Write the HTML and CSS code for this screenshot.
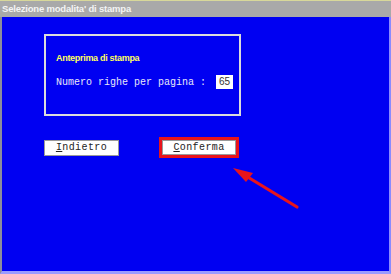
FILE: index.html
```html
<!DOCTYPE html>
<html lang="it">
<head>
    <meta charset="UTF-8">
    <title>Selezione modalita' di stampa</title>
    <link rel="stylesheet" href="styles.css">
</head>
<body>
    <div class="window">
        <div class="titlebar">Selezione modalita' di stampa</div>

        <div class="client">
            <!-- Riquadro anteprima -->
            <div class="panel">
                <div class="panel-title">Anteprima di stampa</div>
                <div class="row">
                    <span class="label">Numero righe per pagina :</span>
                    <span class="field">65</span>
                </div>
            </div>

            <!-- Pulsanti -->
            <div class="buttons">
                <button class="btn"><u>I</u>ndietro</button>
                <div class="highlight">
                    <button class="btn btn-small"><u>C</u>onferma</button>
                </div>
            </div>
        </div>

        <!-- Freccia di annotazione -->
        <svg class="arrow" width="391" height="274" viewBox="0 0 391 274">
            <line x1="297" y1="206" x2="246" y2="175" stroke="#e8141c" stroke-width="3.2" stroke-linecap="round"/>
            <polygon points="233,167 253,172 246,181" fill="#e8141c"/>
        </svg>
    </div>
</body>
</html>
```

FILE: styles.css
```css
body {
    margin: 0;
    padding: 0;
    background: #0000f2;
    font-family: 'Liberation Sans', Arial, sans-serif;
}

/* Finestra */
.window {
    position: relative;
    width: 391px;
    height: 274px;
    display: flex;
    flex-direction: column;
    box-sizing: border-box;
    border-top: 1px solid #d8d89a;
}

.titlebar {
    height: 16px;
    line-height: 16px;
    background: #a9a9a9;
    color: #f4f4f4;
    font-size: 9.5px;
    font-weight: bold;
    padding-left: 2px;
    letter-spacing: -0.2px;
}

.client {
    flex: 1;
    background: #0000f2;
    border-left: 2px solid #8c8c9c;
    border-right: 2px solid #8a8aff;
    border-bottom: 3px solid #9a9aff;
    padding-left: 42px;
    padding-top: 17px;
}

/* Riquadro */
.panel {
    width: 197px;
    height: 82px;
    border: 2px solid #dcdcdc;
    padding: 17px 0 0 10px;
    box-sizing: border-box;
}

.panel-title {
    color: #ffff60;
    font-size: 9px;
    font-weight: bold;
    letter-spacing: -0.3px;
    line-height: 10px;
}

.row {
    display: flex;
    align-items: center;
    margin-top: 12px;
}

.label {
    color: #e8e8f8;
    font-family: 'Liberation Mono', 'Courier New', monospace;
    font-size: 10px;
    width: 160px;
}

.field {
    background: #fff;
    color: #333;
    font-size: 10px;
    width: 17px;
    height: 14px;
    line-height: 14px;
    text-align: center;
}

/* Pulsanti */
.buttons {
    display: flex;
    align-items: center;
    gap: 40px;
    margin-top: 21px;
}

.btn {
    width: 75px;
    height: 16px;
    padding: 0;
    background: #fff;
    border: 1px solid #9a9a9a;
    color: #222;
    font-family: 'Liberation Mono', 'Courier New', monospace;
    font-size: 10px;
    line-height: 14px;
    letter-spacing: 0.4px;
}

.highlight {
    border: 3px solid #e8141c;
    display: flex;
}

.btn-small {
    width: 74px;
    height: 15px;
    line-height: 13px;
}

.arrow {
    position: absolute;
    top: 0;
    left: 0;
    pointer-events: none;
}
```
